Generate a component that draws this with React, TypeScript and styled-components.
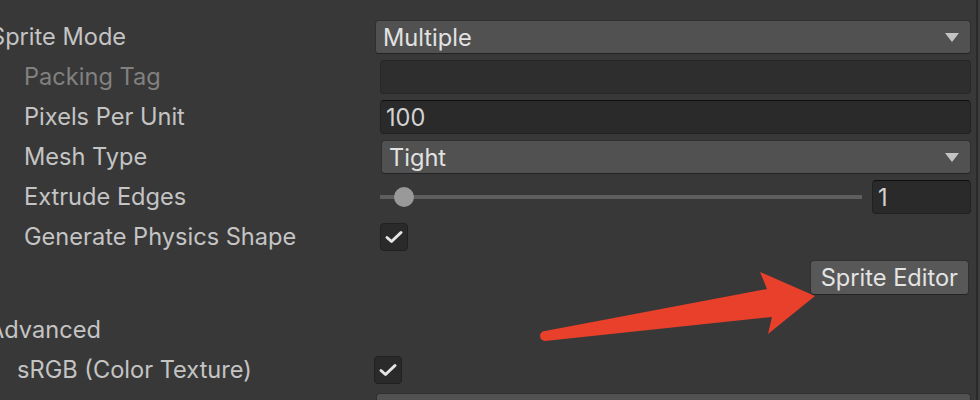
import React from "react";
import styled, { createGlobalStyle } from "styled-components";

const Global = createGlobalStyle`
  html, body { margin: 0; padding: 0; background: #3c3c3c; overflow: hidden; }
  body { font-family: Inter, "Noto Sans", sans-serif; }
`;

const Stage = styled.div`
  position: relative;
  width: 980px;
  height: 400px;
  overflow: hidden;
  background: #3c3c3c;
`;

const Panel = styled.div`
  width: 978px;
  height: 400px;
  box-sizing: border-box;
  background: #383838;
  border-right: 2px solid #2a2a2a;
  padding: 17px 5px 0 0;
  display: flex;
  flex-direction: column;
  overflow: hidden;
`;

const Row = styled.div<{ $gapTop?: number }>`
  display: grid;
  grid-template-columns: 375px 1fr;
  align-items: center;
  height: 40px;
  flex: none;
  margin-top: ${(p) => p.$gapTop ?? 0}px;
`;

const Label = styled.div<{ $indent: number; $disabled?: boolean }>`
  margin-left: ${(p) => p.$indent}px;
  font-size: 23.6px;
  line-height: 40px;
  color: ${(p) => (p.$disabled ? "#818181" : "#c4c4c4")};
  white-space: nowrap;
`;

const Control = styled.div<{ $offset: number }>`
  margin-left: ${(p) => p.$offset}px;
  display: flex;
  align-items: center;
  min-width: 0;
`;

const Dropdown = styled.div`
  flex: 1;
  height: 34px;
  box-sizing: border-box;
  display: flex;
  align-items: center;
  justify-content: space-between;
  padding: 0 11px 0 7px;
  background: #515151;
  border: 1px solid #303030;
  border-bottom-color: #242424;
  border-radius: 4px;
  color: #e2e2e2;
  font-size: 23.6px;
`;

const Caret = styled.span`
  width: 0;
  height: 0;
  border-left: 7px solid transparent;
  border-right: 7px solid transparent;
  border-top: 9px solid #c4c4c4;
`;

const TextField = styled.div<{ $disabled?: boolean; $width?: number }>`
  ${(p) => (p.$width ? `width: ${p.$width}px; flex: none;` : "flex: 1;")}
  height: 34px;
  box-sizing: border-box;
  display: flex;
  align-items: center;
  padding: 0 5px;
  background: ${(p) => (p.$disabled ? "#2e2e2e" : "#2a2a2a")};
  border: 1px solid ${(p) => (p.$disabled ? "#272727" : "#212121")};
  border-top-color: ${(p) => (p.$disabled ? "#262626" : "#0f0f0f")};
  border-radius: 4px;
  color: #d2d2d2;
  font-size: 23.6px;
`;

const SliderTrack = styled.div`
  position: relative;
  flex: 1;
  height: 4px;
  background: #5e5e5e;
  margin-right: 10px;
`;

const SliderKnob = styled.div`
  position: absolute;
  left: 14px;
  top: -8px;
  width: 20px;
  height: 20px;
  border-radius: 50%;
  background: #999999;
`;

const Checkbox = styled.div`
  width: 28px;
  height: 28px;
  box-sizing: border-box;
  background: #2a2a2a;
  border: 1px solid #202020;
  border-radius: 4px;
  display: flex;
  align-items: center;
  justify-content: center;
`;

const ButtonRow = styled.div`
  display: flex;
  justify-content: flex-end;
  align-items: center;
  height: 40px;
  flex: none;
  padding-right: 2px;
`;

const Button = styled.div`
  height: 35px;
  box-sizing: border-box;
  padding: 0 10px;
  display: flex;
  align-items: center;
  background: #585858;
  border: 1px solid #303030;
  border-bottom-color: #242424;
  border-radius: 4px;
  color: #e4e4e4;
  font-size: 23.6px;
`;

const Overlay = styled.svg`
  position: absolute;
  left: 0;
  top: 0;
  pointer-events: none;
`;

const Check = () => (
  <svg width="20" height="16" viewBox="0 0 20 16">
    <polyline
      points="3,8.5 7.5,12.5 17,3.5"
      fill="none"
      stroke="#e6e6e6"
      strokeWidth="3"
      strokeLinecap="round"
      strokeLinejoin="round"
    />
  </svg>
);

export default function App() {
  return (
    <Stage>
      <Global />
      <Panel>
        <Row>
          <Label $indent={-10}>Sprite Mode</Label>
          <Control $offset={0}>
            <Dropdown>
              <span>Multiple</span>
              <Caret />
            </Dropdown>
          </Control>
        </Row>
        <Row>
          <Label $indent={24} $disabled>Packing Tag</Label>
          <Control $offset={5}>
            <TextField $disabled />
          </Control>
        </Row>
        <Row>
          <Label $indent={24}>Pixels Per Unit</Label>
          <Control $offset={5}>
            <TextField>100</TextField>
          </Control>
        </Row>
        <Row>
          <Label $indent={24}>Mesh Type</Label>
          <Control $offset={6}>
            <Dropdown>
              <span>Tight</span>
              <Caret />
            </Dropdown>
          </Control>
        </Row>
        <Row>
          <Label $indent={24}>Extrude Edges</Label>
          <Control $offset={5}>
            <SliderTrack>
              <SliderKnob />
            </SliderTrack>
            <TextField $width={99}>1</TextField>
          </Control>
        </Row>
        <Row>
          <Label $indent={24}>Generate Physics Shape</Label>
          <Control $offset={5}>
            <Checkbox>
              <Check />
            </Checkbox>
          </Control>
        </Row>
        <ButtonRow>
          <Button>Sprite Editor</Button>
        </ButtonRow>
        <Row $gapTop={13}>
          <Label $indent={-12}>Advanced</Label>
          <Control $offset={0} />
        </Row>
        <Row>
          <Label $indent={17}>sRGB (Color Texture)</Label>
          <Control $offset={-1}>
            <Checkbox>
              <Check />
            </Checkbox>
          </Control>
        </Row>
        <Row>
          <Label $indent={17} />
          <Control $offset={1}>
            <Dropdown />
          </Control>
        </Row>
      </Panel>
      <Overlay width="980" height="400" viewBox="0 0 980 400">
        <path
          d="M545 331 L767 289 L760 272 L815 296 L768 334 L772 317 L545 341 A5 5 0 0 1 545 331 Z"
          fill="#e8402a"
        />
      </Overlay>
    </Stage>
  );
}
